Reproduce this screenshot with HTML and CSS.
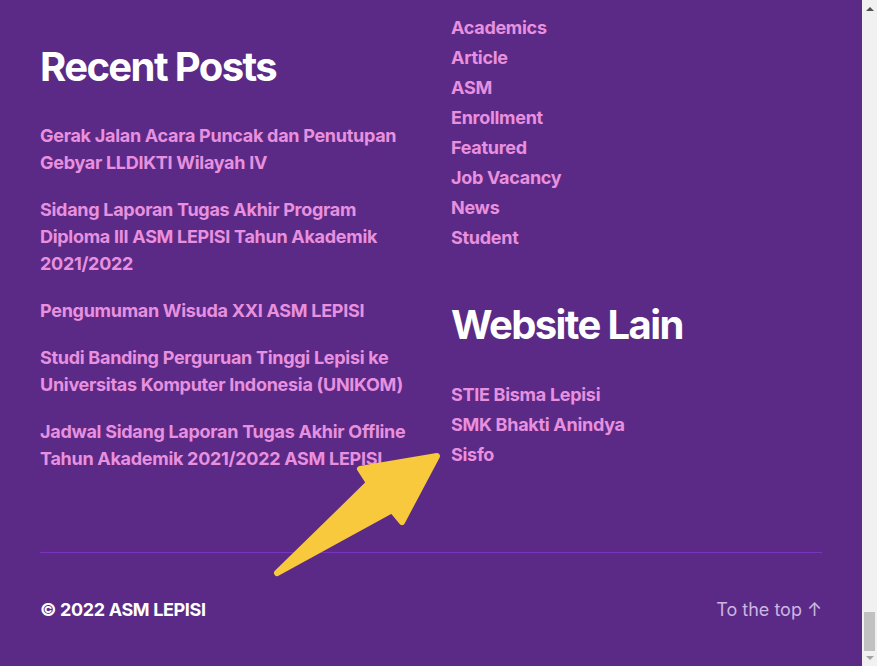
FILE: index.html
```html
<!DOCTYPE html>
<html lang="en">
<head>
  <meta charset="UTF-8" />
  <meta name="viewport" content="width=device-width, initial-scale=1" />
  <title>ASM LEPISI</title>
  <link rel="stylesheet" href="styles.css">
</head>
<body>
  <div class="page">
    <div class="widgets">
      <div class="widget-col">
        <h2 class="widget-title">Recent Posts</h2>
        <ul class="post-list">
          <li><a href="#">Gerak Jalan Acara Puncak dan Penutupan Gebyar LLDIKTI Wilayah IV</a></li>
          <li><a href="#">Sidang Laporan Tugas Akhir Program Diploma III ASM LEPISI Tahun Akademik 2021/2022</a></li>
          <li><a href="#">Pengumuman Wisuda XXI ASM LEPISI</a></li>
          <li><a href="#">Studi Banding Perguruan Tinggi Lepisi ke Universitas Komputer Indonesia (UNIKOM)</a></li>
          <li><a href="#">Jadwal Sidang Laporan Tugas Akhir Offline Tahun Akademik 2021/2022 ASM LEPISI</a></li>
        </ul>
      </div>
      <div class="widget-col right">
        <ul class="link-list">
          <li><a href="#">Academics</a></li>
          <li><a href="#">Article</a></li>
          <li><a href="#">ASM</a></li>
          <li><a href="#">Enrollment</a></li>
          <li><a href="#">Featured</a></li>
          <li><a href="#">Job Vacancy</a></li>
          <li><a href="#">News</a></li>
          <li><a href="#">Student</a></li>
        </ul>
        <h2 class="widget-title second">Website Lain</h2>
        <ul class="link-list">
          <li><a href="#">STIE Bisma Lepisi</a></li>
          <li><a href="#">SMK Bhakti Anindya</a></li>
          <li><a href="#">Sisfo</a></li>
        </ul>
      </div>
    </div>

    <footer class="site-footer">
      <p class="copyright">&copy; 2022 <a href="#">ASM LEPISI</a></p>
      <a class="to-top" href="#">To the top <span class="arrow">&uarr;</span></a>
    </footer>

    <svg class="pointer" viewBox="0 0 862 666" width="862" height="666">
      <path d="M277 573 L369 483 L360 469 L437 456 L402 522 L392 510 Z"
            fill="#f8c93c" stroke="#f8c93c" stroke-width="6" stroke-linejoin="round" />
    </svg>
  </div>

  <div class="scrollbar">
    <div class="sb-btn"><span class="tri up"></span></div>
    <div class="sb-track"><div class="sb-thumb"></div></div>
    <div class="sb-btn"><span class="tri down"></span></div>
  </div>
</body>
</html>
```

FILE: styles.css
```css
html, body {
  margin: 0;
  padding: 0;
  height: 100%;
}

body {
  display: flex;
  background: #5b2a86;
  font-family: 'Inter', 'Noto Sans', sans-serif;
  color: #fff;
  overflow: hidden;
}

a {
  color: #e890de;
  text-decoration: none;
}

.page {
  position: relative;
  flex: 1;
  padding: 0 40px;
  min-height: 666px;
}

.widgets {
  display: grid;
  grid-template-columns: 1fr 1fr;
  gap: 40px;
  padding-bottom: 80px;
}

.widget-col {
  padding-top: 43px;
}

.widget-col.right {
  padding-top: 13px;
}

.widget-title {
  margin: 0 0 31px;
  font-size: 40px;
  line-height: 48px;
  font-weight: 700;
  letter-spacing: -0.04em;
  color: #fff;
}

.widget-title.second {
  margin-top: 48px;
}

.post-list, .link-list {
  list-style: none;
  margin: 0;
  padding: 0;
  font-size: 18px;
  font-weight: 700;
  letter-spacing: -0.016em;
}

.post-list li {
  line-height: 27px;
  margin-bottom: 20px;
}

.post-list li:last-child {
  margin-bottom: 0;
}

.link-list li {
  line-height: 30px;
}

.site-footer {
  display: flex;
  justify-content: space-between;
  align-items: center;
  border-top: 1px solid #7b34c0;
  padding-top: 43px;
  font-size: 18px;
  line-height: 27px;
}

.copyright {
  margin: 0;
  font-weight: 700;
  letter-spacing: -0.02em;
  color: #fff;
}

.copyright a {
  color: #fff;
}

.to-top {
  color: #cbb6e2;
}

.pointer {
  position: absolute;
  left: 0;
  top: 0;
  pointer-events: none;
}

.scrollbar {
  width: 15px;
  display: flex;
  flex-direction: column;
  background: #f1f1f1;
}

.sb-btn {
  height: 17px;
  display: flex;
  align-items: center;
  justify-content: center;
}

.tri {
  width: 0;
  height: 0;
  border-left: 4px solid transparent;
  border-right: 4px solid transparent;
}

.tri.up {
  border-bottom: 4px solid #505050;
}

.tri.down {
  border-top: 4px solid #a3a3a3;
}

.sb-track {
  flex: 1;
  display: flex;
  flex-direction: column;
  justify-content: flex-end;
  padding: 0 2px;
}

.sb-thumb {
  height: 39px;
  margin-bottom: -2px;
  background: #c1c1c1;
}
```
